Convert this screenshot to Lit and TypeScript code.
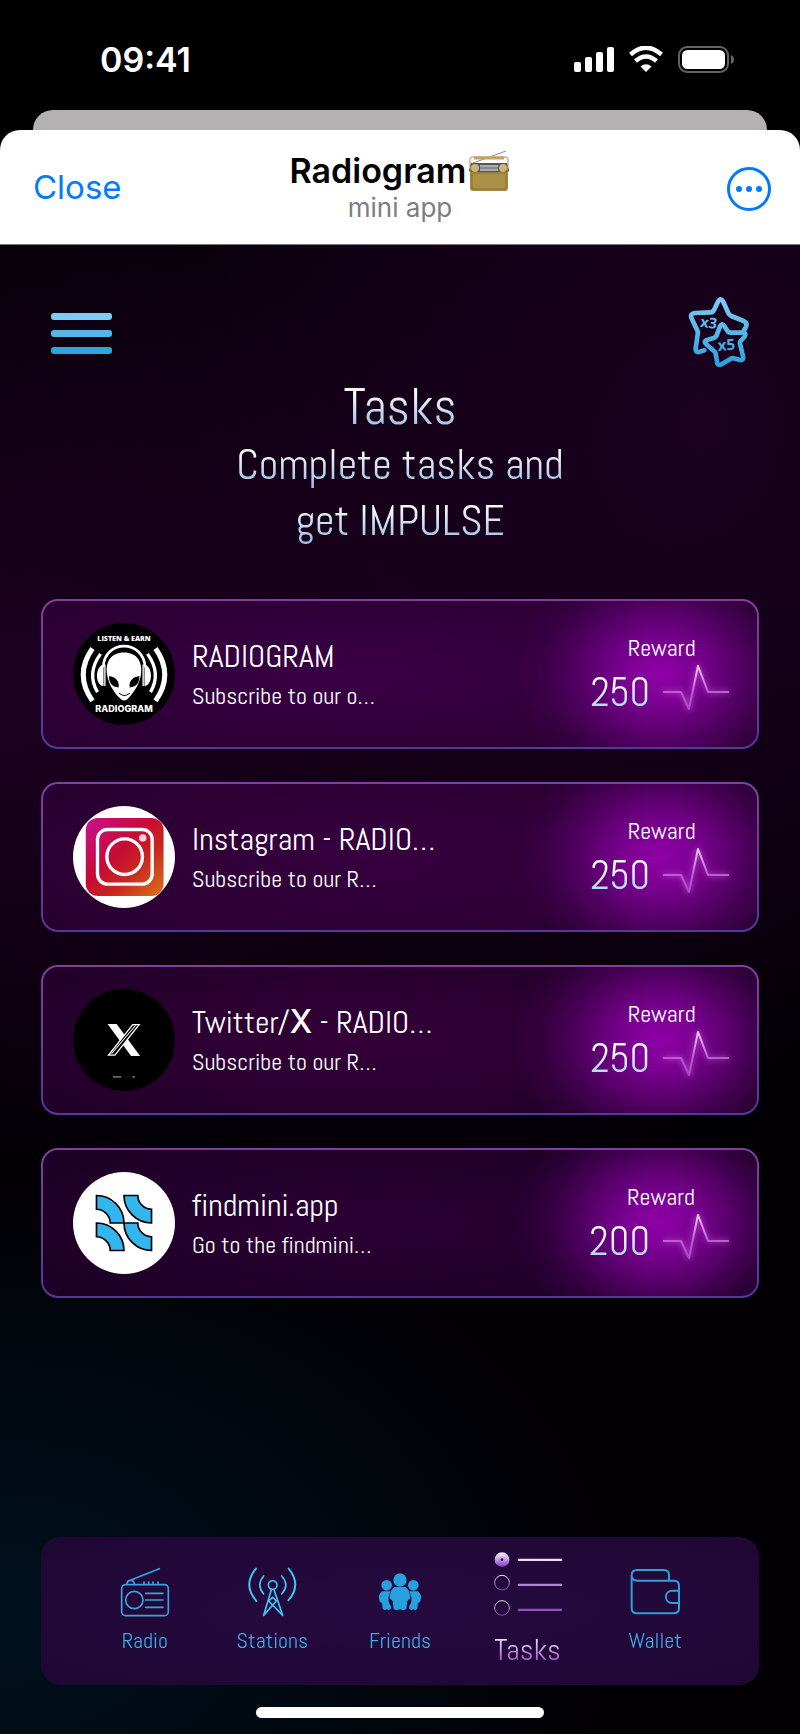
import { LitElement, html, svg, css } from "lit";
import { customElement, property } from "lit/decorators.js";
import { classMap } from "lit/directives/class-map.js";

const alien = svg`<svg viewBox="131 98 304 304" aria-hidden="true">
  <circle cx="283" cy="250" r="152" fill="#000"/>
  <text x="283" y="152" text-anchor="middle" font-family="Open Sans, sans-serif" font-weight="800" font-size="21" fill="#fff">LISTEN &amp; EARN</text>
  <g fill="none" stroke="#fff">
    <path d="M189 174Q134 252 189 330" stroke-width="15"/>
    <path d="M213 190Q171 248 204 304" stroke-width="10"/>
    <path d="M377 174Q432 252 377 330" stroke-width="15"/>
    <path d="M353 190Q395 248 362 304" stroke-width="10"/>
    <path d="M221 230C224 146 342 146 346 230" stroke-width="8"/>
  </g>
  <path d="M222 222C196 228 196 284 222 286ZM344 222C370 228 370 284 344 286Z" fill="#fff"/>
  <path d="M226 222V286M340 222V286" stroke="#fff" stroke-width="4"/>
  <path d="M283 186C322 186 338 214 334 248C330 286 302 318 292 326Q284 332 275 326C262 316 236 286 232 248C228 214 244 186 283 186Z" fill="#fff"/>
  <path d="M238 257C258 258 270 272 267 290C248 290 238 276 238 257ZM329 257C309 258 297 272 300 290C319 290 329 276 329 257Z" fill="#000"/>
  <path d="M268 307Q284 321 300 307" fill="none" stroke="#000" stroke-width="3"/>
  <text x="283" y="364" text-anchor="middle" font-family="Inter, sans-serif" font-weight="800" font-size="27" fill="#fff">RADIOGRAM</text>
</svg>`;

const instagram = svg`<svg viewBox="131 108 304 304" aria-hidden="true">
  <defs>
    <linearGradient id="insta" x1="0" y1="0" x2="1" y2="1">
      <stop offset="0" stop-color="#c9128f"/><stop offset=".42" stop-color="#c70a35"/>
      <stop offset=".65" stop-color="#c9251f"/><stop offset="1" stop-color="#d5771a"/>
    </linearGradient>
  </defs>
  <circle cx="283" cy="260" r="152" fill="#fff"/>
  <rect x="169" y="144" width="232" height="232" rx="36" fill="url(#insta)"/>
  <g fill="none" stroke="#fff" stroke-width="10">
    <rect x="204" y="178" width="163" height="163" rx="30"/>
    <circle cx="285" cy="259" r="53"/>
  </g>
  <circle cx="339" cy="203" r="11" fill="#fbd0e4"/>
</svg>`;

const xLogo = svg`<svg viewBox="131 118 304 304" aria-hidden="true">
  <circle cx="283" cy="270" r="152" fill="#000"/>
  <path d="M234 222H261L331 318H304Z" fill="#fff"/>
  <path d="M309 224H328L256 315H237Z" fill="#000" stroke="#fff" stroke-width="4"/>
  <path d="M246 311L318 226" stroke="#fff" stroke-width="3"/>
  <path d="M250 380H275" stroke="#888" stroke-width="4"/>
  <path d="M281 380H302" stroke="#2b2b2b" stroke-width="2"/>
  <path d="M309 380H314" stroke="#999" stroke-width="5"/>
</svg>`;

const findmini = svg`<svg viewBox="131 127 304 304" aria-hidden="true">
  <circle cx="283" cy="279" r="152" fill="#fff"/>
  <g fill="#33b5ee" stroke="#000" stroke-width="5">
    <path d="M201 197C246 197 283 234 283 279H242C242 257 223 238 201 238Z"/>
    <path d="M283 197H324C324 219 343 238 365 238V279C320 279 283 242 283 197Z"/>
    <path d="M201 279C246 279 283 316 283 361H242C242 339 223 320 201 320Z"/>
    <path d="M283 279H324C324 301 343 320 365 320V361C320 361 283 324 283 279Z"/>
  </g>
</svg>`;

const radioIcon = svg`<svg class="icon" width="52" height="52" viewBox="26 47 156 156" aria-hidden="true">
  <g fill="none" stroke="#3aa3e0" stroke-width="5" stroke-linecap="round">
    <rect x="34" y="103" width="140" height="93" rx="12"/>
    <circle cx="72" cy="149" r="26"/>
    <path d="M106 129H158M106 149H158M106 171H158"/>
    <path d="M50 102C50 86 72 86 72 102M54 92L147 55"/>
    <path d="M101 101V95M115 101V95M128 101V95M143 101V95"/>
  </g>
</svg>`;

const stationsIcon = svg`<svg class="icon" width="52" height="52" viewBox="407 47 156 156" aria-hidden="true">
  <g fill="none" stroke="#3fc4f2" stroke-width="5" stroke-linecap="round" stroke-linejoin="round">
    <circle cx="487" cy="104" r="13"/>
    <path d="M460 77Q437 104 460 131M514 77Q539 104 514 131"/>
    <path d="M437 55Q396 103 438 152M535 55Q575 103 534 150" stroke-width="6"/>
    <path d="M483 118L460 195L498 152L487 141L475 152L517 195L491 118"/>
  </g>
</svg>`;

const friendsIcon = svg`<svg class="icon" width="52" height="52" viewBox="787 45 156 156" aria-hidden="true">
  <g fill="#27a0dd">
    <circle cx="825" cy="103" r="16"/><circle cx="905" cy="103" r="16"/>
    <path d="M811 121H838C830 132 829 148 833 158L838 166L837 174L830 178L825 174L820 178L813 174L811 156L804 152Q797 132 811 121Z"/>
    <path d="M919 121H892C900 132 901 148 897 158L892 166L893 174L900 178L905 174L910 178L917 174L919 156L926 152Q933 132 919 121Z"/>
    <circle cx="865" cy="87" r="20"/>
    <path d="M848 108H882Q896 118 896 142L887 150L884 175L873 178L865 174L857 178L846 175L843 150L834 142Q834 118 848 108Z"/>
  </g>
</svg>`;

const tasksIcon = svg`<svg class="icon" width="68" height="64" viewBox="41 39 204 192" aria-hidden="true">
  <defs>
    <linearGradient id="dot" x1="0" y1="0" x2="0" y2="1"><stop offset=".1" stop-color="#f3e6fb"/><stop offset="1" stop-color="#8238c0"/></linearGradient>
    <linearGradient id="ring" x1="0" y1="0" x2="0" y2="1"><stop offset="0" stop-color="#efe0f7"/><stop offset="1" stop-color="#7c46aa"/></linearGradient>
  </defs>
  <circle cx="65" cy="62" r="22" fill="url(#dot)"/><circle cx="65" cy="62" r="4" fill="#2a0a40"/>
  <g fill="none" stroke="url(#ring)" stroke-width="3"><circle cx="65" cy="131" r="22"/><circle cx="65" cy="207" r="22"/></g>
  <path d="M113 59H245V66H113Z" fill="#ecdcf6"/>
  <path d="M113 134H245V141H113Z" fill="#b285d6"/>
  <path d="M113 209H245V216H113Z" fill="#8f52bf"/>
</svg>`;

const walletIcon = svg`<svg class="icon" width="52" height="52" viewBox="448 77 156 156" aria-hidden="true">
  <g fill="none" stroke="#2f9fdb" stroke-width="6" stroke-linejoin="round">
    <path d="M456 104V203Q456 219 472 219H582Q598 219 598 203V136Q598 121 583 121H473Q456 121 456 105Q456 89 472 89H552Q568 89 568 104V121"/>
    <path d="M598 151H578C552 151 552 188 578 188H598"/>
  </g>
</svg>`;

@customElement("task-card")
class TaskCard extends LitElement {
  @property({ attribute: false }) picture: unknown;
  @property({ attribute: false }) heading: unknown;
  @property() note = "";
  @property({ type: Number }) reward = 0;

  static styles = css`
    :host { display: block; }
    .card {
      display: flex; align-items: center; gap: 17px;
      padding: 22px 28px 22px 30px;
      border: 2px solid transparent; border-radius: 17px;
      color: #fff; text-decoration: none;
      background:
        radial-gradient(ellipse 148px 124px at calc(100% - 96px) 50%, #8f00a6 0, #8700a0e8 20%, #7a0092bf 40%, #6a008080 60%, #55006a38 80%, #40005000 100%) padding-box,
        radial-gradient(ellipse 420px 110px at 46% 50%, var(--tint, #3a0046), transparent) padding-box,
        linear-gradient(var(--base, #290030), var(--base, #290030)) padding-box,
        linear-gradient(#813f9f, #54389a) border-box;
    }
    .picture { flex: none; width: 102px; height: 102px; }
    .picture svg { display: block; width: 100%; height: 100%; }
    .words { flex: 1; min-width: 0; display: flex; flex-direction: column; gap: 4px; }
    .heading { font-size: 32px; line-height: 40px; white-space: nowrap; }
    .glyph { font-family: Inter, sans-serif; font-weight: 500; }
    .note { font-size: 24px; line-height: 32px; white-space: nowrap; }
    .reward { display: flex; flex-direction: column; align-items: center; padding-top: 6px; }
    .caption { font-size: 24px; line-height: 32px; padding-left: 4px; }
    .sum { display: flex; align-items: center; gap: 13px; }
    .amount {
      font-size: 40px; line-height: 48px; color: transparent;
      background: linear-gradient(#fff 25%, #a9d4f2 85%); background-clip: text; -webkit-background-clip: text;
    }
    .pulse { filter: drop-shadow(0 0 3px #d45ce8); overflow: visible; margin-bottom: 12px; }
  `;

  render() {
    return html`<a class="card" href="#">
      <span class="picture">${this.picture}</span>
      <span class="words">
        <span class="heading">${this.heading}</span>
        <span class="note">${this.note}</span>
      </span>
      <span class="reward">
        <span class="caption">Reward</span>
        <span class="sum">
          <span class="amount">${this.reward}</span>
          <svg class="pulse" width="66" height="46" viewBox="0 0 66 46" aria-hidden="true">
            <defs><linearGradient id="beat" gradientUnits="userSpaceOnUse" x1="0" y1="0" x2="0" y2="46"><stop offset="0" stop-color="#f2d3f5"/><stop offset=".6" stop-color="#b860d0"/><stop offset="1" stop-color="#a549c4"/></linearGradient></defs>
            <path d="M0 28H18L26 45L35 2L45 28H66" fill="none" stroke="url(#beat)" stroke-width="2" stroke-linejoin="round"/>
          </svg>
        </span>
      </span>
    </a>`;
  }
}

const tasks = [
  { tone: "one", picture: alien, heading: "RADIOGRAM", note: "Subscribe to our o…", reward: 250 },
  { tone: "two", picture: instagram, heading: "Instagram - RADIO…", note: "Subscribe to our R…", reward: 250 },
  { tone: "three", picture: xLogo, heading: html`Twitter/<span class="glyph">X</span> - RADIO…`, note: "Subscribe to our R…", reward: 250 },
  { tone: "four", picture: findmini, heading: "findmini.app", note: "Go to the findmini…", reward: 200 },
];

const tabs = [
  { label: "Radio", icon: radioIcon },
  { label: "Stations", icon: stationsIcon },
  { label: "Friends", icon: friendsIcon },
  { label: "Tasks", icon: tasksIcon, active: true },
  { label: "Wallet", icon: walletIcon },
];

@customElement("app-root")
class AppRoot extends LitElement {
  static styles = css`
    :host {
      display: flex; flex-direction: column; min-height: 100vh; background: #000;
      font-family: Abel, "Roboto Condensed", sans-serif;
    }
    * { box-sizing: border-box; }
    button { padding: 0; border: 0; background: none; cursor: pointer; }
    svg { display: block; }
    .status {
      display: flex; justify-content: space-between; align-items: center;
      height: 110px; padding: 9px 64px 0 100px; color: #fff;
      font: 600 34px/40px Inter, sans-serif;
    }
    .behind { height: 20px; margin: 0 33px; border-radius: 20px 20px 0 0; background: #b3b1b2; }
    .bar {
      display: grid; grid-template-columns: 1fr auto 1fr; align-items: center;
      height: 115px; padding: 0 29px; background: #fff;
      border-radius: 20px 20px 0 0; border-bottom: 1px solid #777;
      font-family: Inter, sans-serif;
    }
    .close { justify-self: start; padding: 0 4px; font: 400 33px/40px Inter, sans-serif; color: #007aff; }
    .title { display: flex; flex-direction: column; align-items: center; }
    .name { display: flex; align-items: center; gap: 2px; margin: 0; font-size: 34px; line-height: 40px; font-weight: 600; color: #000; }
    .sub { font-size: 26px; line-height: 32px; color: #7d7d80; }
    .more { justify-self: end; padding-top: 3px; }
    .page {
      flex: 1; display: flex; flex-direction: column; padding: 52px 41px 16px;
      background:
        radial-gradient(ellipse 520px 620px at 88% 12%, #1b0020, transparent),
        radial-gradient(ellipse 480px 480px at 0% 30%, #1d0021, transparent),
        radial-gradient(ellipse 640px 620px at 50% 24%, #160019, transparent),
        radial-gradient(ellipse 620px 440px at 0% 92%, #00111e, transparent),
        #020004;
    }
    .tools { display: flex; justify-content: space-between; align-items: center; padding: 0 10px; }
    .menu { padding-top: 3px; }
    .intro { text-align: center; margin: 10px 0 50px; }
    .intro h1, .intro p { margin: 0; font-weight: 400; }
    .intro h1 { font-size: 51px; line-height: 60px; }
    .intro p { font-size: 43px; line-height: 56px; }
    .shine {
      display: block; color: transparent;
      background: linear-gradient(#fff 22%, #a3c3e2 82%); background-clip: text; -webkit-background-clip: text;
    }
    .list { display: flex; flex-direction: column; gap: 33px; margin: 0 0 40px; padding: 0; list-style: none; }
    .two { --tint: #37003f; --base: #27002e; }
    .three { --tint: #330038; --base: #210028; }
    .four { --tint: #2b0034; --base: #1c0024; }
    .tabs {
      display: flex; align-items: center; height: 148px; margin-top: auto; padding: 0 40px;
      border-radius: 20px; background: radial-gradient(ellipse at 50% 50%, #260a40, #1f0733);
    }
    .tab {
      flex: 1 1 0; display: flex; flex-direction: column; align-items: center; gap: 6px;
      text-decoration: none; font-size: 22px; line-height: 32px;
    }
    .label { color: transparent; background: linear-gradient(#34a0e4, #3fc0e8); background-clip: text; -webkit-background-clip: text; }
    .active { font-size: 30px; line-height: 40px; gap: 14px; }
    .active .label { background-image: linear-gradient(#f5e6fb 20%, #9148c4 85%); }
    .home { width: 40%; height: 11px; margin: 22px auto 0; border-radius: 6px; background: #fff; }
  `;

  render() {
    return html`
      <div class="status">
        <span>09:41</span>
        <svg width="162" height="27" viewBox="0 0 162 27" aria-hidden="true">
          <g fill="#fff">
            <rect x="0" y="16" width="7" height="10" rx="2"/><rect x="11" y="11" width="7" height="15" rx="2"/>
            <rect x="22" y="6" width="7" height="20" rx="2"/><rect x="33" y="1" width="7" height="25" rx="2"/>
          </g>
          <path d="M56.500 8.500Q72-5 87.500 8.500M61.500 15Q72 6 82.500 15" fill="none" stroke="#fff" stroke-width="4.500"/>
          <path d="M66.500 20.500Q72 16 77.500 20.500L72 26Z" fill="#fff"/>
          <rect x="105" y="1" width="49" height="25" rx="8" fill="none" stroke="#636363" stroke-width="2"/>
          <rect x="108" y="4" width="43" height="19" rx="5.500" fill="#fff"/>
          <path d="M157 9Q160 10 160 13.500T157 18Z" fill="#636363"/>
        </svg>
      </div>
      <div class="behind"></div>
      <header class="bar">
        <button class="close">Close</button>
        <div class="title">
          <h2 class="name">Radiogram
            <svg width="42" height="42" viewBox="0 0 42 42" role="img" aria-label="radio">
              <path d="M5 13L38 1" stroke="#a58f90" stroke-width="1.200"/>
              <path d="M2 20V10Q2 7 5 7H37Q40 7 40 10V20" fill="none" stroke="#c9c6bd" stroke-width="2"/>
              <path d="M6 8H36" stroke="#c2a35c" stroke-width="3"/>
              <path d="M1 20H41" stroke="#555" stroke-width="3"/>
              <rect x="2" y="13" width="38" height="28" rx="3" fill="#a38a42"/>
              <rect x="3" y="13" width="36" height="9" fill="#57545b"/>
              <rect x="12" y="15" width="18" height="6" fill="#a9abb5"/>
              <path d="M12 18H30" stroke="#66656f"/>
              <circle cx="7" cy="18" r="4" fill="#cdb479"/><circle cx="35" cy="18" r="4" fill="#cdb479"/>
              <rect x="4" y="23" width="34" height="16" rx="1" fill="#ab9148" stroke="#8b7434"/>
            </svg>
          </h2>
          <span class="sub">mini app</span>
        </div>
        <button class="more" aria-label="More">
          <svg width="44" height="44" viewBox="0 0 44 44" aria-hidden="true">
            <circle cx="22" cy="22" r="20.500" fill="none" stroke="#007aff" stroke-width="3"/>
            <g fill="#007aff"><circle cx="12" cy="22" r="3"/><circle cx="22" cy="22" r="3"/><circle cx="32" cy="22" r="3"/></g>
          </svg>
        </button>
      </header>
      <main class="page">
        <div class="tools">
          <button class="menu" aria-label="Menu">
            <svg width="61" height="42" viewBox="0 0 61 42" aria-hidden="true">
              <rect width="61" height="7" rx="3" fill="#7fcaf0"/>
              <rect y="17" width="61" height="7" rx="3" fill="#57b5e6"/>
              <rect y="34" width="61" height="7" rx="3" fill="#2ba5de"/>
            </svg>
          </button>
          <button aria-label="Boosts">
            <svg width="61" height="70" viewBox="55 50 183 210" aria-hidden="true">
              <defs><linearGradient id="star" gradientUnits="userSpaceOnUse" x1="0" y1="50" x2="0" y2="260"><stop offset="0" stop-color="#82ccf0"/><stop offset="1" stop-color="#27a2dd"/></linearGradient></defs>
              <g fill="none" stroke="url(#star)" stroke-width="14" stroke-linejoin="round" stroke-linecap="round">
                <path d="M104 210L88 215Q77 217 78 204L85 155L65 112Q61 99 76 98L123 96Q129 96 133 89L145 64Q152 51 160 63L176 98Q178 104 185 107L222 122Q234 128 229 140L222 152"/>
                <path d="M151 138Q157 126 164 137L173 151Q176 157 183 157L219 157Q232 158 224 170L213 182Q209 187 212 194L220 228Q223 241 210 239L192 234Q186 232 181 237L157 251Q143 259 142 244L138 220Q137 214 132 211L109 191Q101 183 112 179L132 173Q138 171 141 165Z"/>
              </g>
              <g fill="url(#star)" font-family="Open Sans, sans-serif" font-weight="700">
                <text transform="rotate(8 90 139)" x="90" y="139" font-size="44">x3</text>
                <text transform="rotate(-4 145 212)" x="145" y="212" font-size="46">x5</text>
              </g>
            </svg>
          </button>
        </div>
        <div class="intro">
          <h1 class="shine">Tasks</h1>
          <p><span class="shine">Complete tasks and</span><span class="shine">get IMPULSE</span></p>
        </div>
        <ul class="list">
          ${tasks.map(t => html`<li class=${t.tone}><task-card .picture=${t.picture} .heading=${t.heading} .note=${t.note} .reward=${t.reward}></task-card></li>`)}
        </ul>
        <nav class="tabs">
          ${tabs.map(t => html`<a href="#" class=${classMap({ tab: true, active: !!t.active })}>${t.icon}<span class="label">${t.label}</span></a>`)}
        </nav>
        <div class="home"></div>
      </main>`;
  }
}
